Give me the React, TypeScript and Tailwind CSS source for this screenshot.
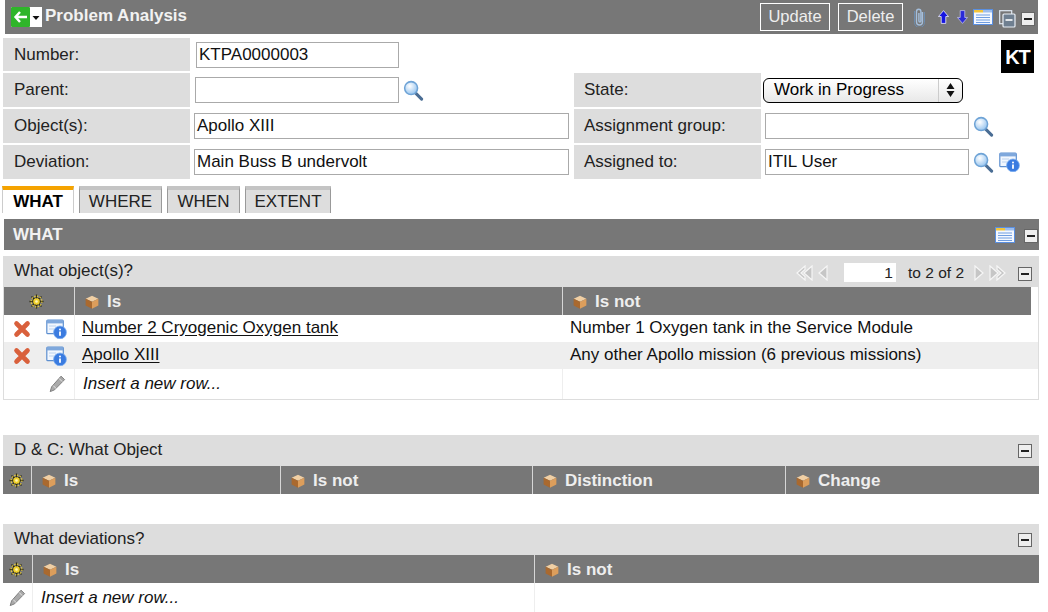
import React from "react";

const Mag = () => (
  <svg width="21" height="21" viewBox="0 0 22 22" className="shrink-0">
    <defs><radialGradient id="mg" cx="40%" cy="35%" r="70%"><stop offset="0" stopColor="#ffffff"/><stop offset="1" stopColor="#8fc0ee"/></radialGradient></defs>
    <path d="M13 13.5L19.5 20" stroke="#4a6d94" strokeWidth="3.2" strokeLinecap="round"/>
    <circle cx="8.5" cy="8.5" r="6.8" fill="url(#mg)" stroke="#6ea3d6" strokeWidth="1.6"/>
  </svg>
);
const Info = () => (
  <svg width="21" height="20" viewBox="0 0 21 20" className="shrink-0">
    <rect x="0.8" y="1.2" width="16.5" height="13.5" rx="1" fill="#f2f7fe" stroke="#5d8fd0" strokeWidth="1.2"/>
    <rect x="1" y="1.2" width="16" height="3.2" fill="#7fa8dc"/>
    <path d="M3 7h7M3 10h5" stroke="#bcd2ee" strokeWidth="1"/>
    <circle cx="14" cy="13.4" r="6.4" fill="#3a7be0"/>
    <circle cx="14" cy="13.4" r="6.4" fill="none" stroke="#7fb0f0" strokeWidth="0.8"/>
    <circle cx="14" cy="10.4" r="1" fill="#fff"/>
    <path d="M14 12.4v4.4" stroke="#fff" strokeWidth="1.8"/>
  </svg>
);
const Cross = () => (
  <svg width="18" height="18" viewBox="0 0 18 18" className="shrink-0">
    <path d="M3.5 3.5L14.5 14.5M14.5 3.5L3.5 14.5" stroke="#d9603c" strokeWidth="4.6" strokeLinecap="round"/>
  </svg>
);
const Pencil = () => (
  <svg width="17" height="18" viewBox="0 0 17 18" className="shrink-0">
    <path d="M12 1.2l3.6 3.4L5.6 14.8 1.2 16.6l1.4-4.8z" fill="#aaaaaa" stroke="#808080" strokeWidth="1"/>
    <path d="M4.2 10.6l3.2 3.2M10 3.4l3.2 3.2" stroke="#e6e6e6" strokeWidth="1"/>
  </svg>
);
const Box = () => (
  <svg width="14" height="14" viewBox="0 0 13 13" className="shrink-0">
    <path d="M6.5 .6L12.4 3.4 6.5 6.2 .6 3.4z" fill="#f0cfa4"/>
    <path d="M.6 3.4l5.9 2.8V12.8L.6 9.8z" fill="#a9692f"/>
    <path d="M12.4 3.4L6.5 6.2V12.8L12.4 9.8z" fill="#dc9e5c"/>
  </svg>
);
const Gear = () => (
  <svg width="15" height="15" viewBox="0 0 15 15" className="shrink-0">
    <g stroke="#2a2812" strokeWidth="1.3">
      <path d="M7.5 .5v14M.5 7.5h14M2.5 2.5l10 10M12.5 2.5l-10 10"/>
    </g>
    <circle cx="7.5" cy="7.5" r="5.4" fill="none" stroke="#e8cc3a" strokeWidth="1.2" strokeDasharray="1.5 1.3"/>
    <circle cx="7.5" cy="7.5" r="3.6" fill="#f0d02c" stroke="#3d3610" strokeWidth="1" strokeDasharray="1.2 0.8"/>
    <circle cx="7.5" cy="7.5" r="1.3" fill="#fff7b8"/>
  </svg>
);
const Minus = () => (
  <span className="flex h-[14px] w-[14px] shrink-0 items-center justify-center border border-[#666666] bg-[#eeeeee]">
    <span className="h-[2px] w-[8px] bg-[#222222]" />
  </span>
);
const Form = () => (
  <svg width="20" height="16" viewBox="0 0 20 16" className="shrink-0">
    <rect x="0.5" y="0.5" width="19" height="15" fill="#f4f8ff" stroke="#5a8fe0"/>
    <rect x="1" y="1" width="9" height="2.5" fill="#f2c33a"/>
    <rect x="10" y="1" width="9" height="2.5" fill="#9dbdec"/>
    <path d="M3 6h14M3 8.5h14M3 11h14M3 13.5h14" stroke="#6f9de0" strokeWidth="1"/>
  </svg>
);
const Arrow = ({ up }: { up?: boolean }) => (
  <svg width="11" height="16" viewBox="0 0 12 16" className="shrink-0">
    <path d={up ? "M6 1L11.5 7.5H8.5V15H3.5V7.5H0.5z" : "M6 15L11.5 8.5H8.5V1H3.5V8.5H0.5z"} fill={up ? "#1414e0" : "#2a2ad8"} stroke={up ? "#ffffff" : "#c9c9ef"} strokeWidth="0.8"/>
  </svg>
);
const Clip = () => (
  <svg width="13" height="20" viewBox="0 0 13 20" className="shrink-0">
    <path d="M9.5 5v10a3 3 0 0 1-6 0V4.5a2.2 2.2 0 0 1 4.4 0V14a1 1 0 0 1-2 0V6" fill="none" stroke="#a4bedb" strokeWidth="1.4"/>
    <path d="M11.5 5v10.5a5 5 0 0 1-10 0V4" fill="none" stroke="#6d8cae" strokeWidth="1"/>
  </svg>
);
const Copy = () => (
  <svg width="17" height="18" viewBox="0 0 17 18" className="mt-[3px] shrink-0">
    <rect x="0.7" y="0.7" width="12" height="13" fill="none" stroke="#dfe8f2" strokeWidth="1.2"/>
    <rect x="4" y="4" width="12" height="13" rx="1" fill="#6f7f90" stroke="#e9eff6" strokeWidth="1.2"/>
    <path d="M6.5 10h7" stroke="#fff" strokeWidth="1.6"/>
  </svg>
);
const Chev = ({ dir, dbl }: { dir: "l" | "r"; dbl?: boolean }) => (
  <svg width={dbl ? 17 : 11} height="16" viewBox={dbl ? "0 0 17 16" : "0 0 11 16"} className="shrink-0">
    <g fill="#c6c6c6" stroke="#f6f6f6" strokeWidth="1.2" transform={dir === "r" ? `scale(-1 1) translate(${dbl ? -17 : -11} 0)` : undefined}>
      {dbl && <path d="M9 1L1 8l8 7V11.5L5 8l4-3.5z" />}
      <path d={dbl ? "M16 1L8 8l8 7z" : "M10 1L2 8l8 7z"} />
    </g>
  </svg>
);

const Label = ({ children, w }: { children: React.ReactNode; w: string }) => (
  <div className={`flex items-center bg-[#dddddd] text-[#222222] ${w}`}>{children}</div>
);
const Field = ({ v, w }: { v?: string; w: string }) => (
  <div className={`flex h-[26px] items-center border border-[#aaaaaa] bg-white pb-[1px] pl-[2px] text-[#111111] ${w}`}>{v}</div>
);

const H = ({ t, w }: { t?: string; w: string }) => (
  <div className={`flex h-full items-center gap-[8px] border-r border-white/70 pl-[10px] pt-[1px] font-bold text-[#eeeeee] ${w}`}>
    <Box />
    {t}
  </div>
);
const SectionHead = ({ t, low, children }: { t: string; low?: boolean; children?: React.ReactNode }) => (
  <div className="flex h-[31px] items-center bg-[#dddddd] pl-[11px] pr-[7px] text-[#222222]">
    <span className="flex-1 pb-[2px]">{t}</span>
    {children}
    <span className={low ? "mt-[5px]" : "mt-[1px]"}><Minus /></span>
  </div>
);

export default function App() {
  return (
    <div className="h-[612px] w-[1048px] overflow-hidden bg-white text-[17px] leading-[18px] [font-family:'Liberation_Sans',Arial,sans-serif]">
      <div className="ml-[5px] flex h-[34px] w-[1033px] items-center bg-[#777777] pl-[6px] pr-[3px]">
        <div className="flex h-[20px] w-[31px] items-center bg-white">
          <svg width="19" height="20" viewBox="0 0 19 20" className="shrink-0">
            <rect width="19" height="20" rx="1" fill="#2fb52a"/>
            <path d="M9 5L4.5 10 9 15M5 10H16" fill="none" stroke="#fff" strokeWidth="2.4"/>
          </svg>
          <svg width="12" height="19" viewBox="0 0 12 19" className="shrink-0"><path d="M2.5 8h7L6 12z" fill="#111"/></svg>
        </div>
        <span className="ml-[3px] flex-1 pb-[3px] font-bold text-[#f2f2f2]">Problem Analysis</span>
        <div className="flex h-[28px] w-[70px] items-center justify-center border border-white pb-[2px] text-[16.5px] text-[#eeeeee]">Update</div>
        <div className="ml-[8px] flex h-[28px] w-[65px] items-center justify-center border border-white pb-[2px] text-[16.5px] text-[#eeeeee]">Delete</div>
        <span className="ml-[10px]"><Clip /></span>
        <span className="ml-[12px]"><Arrow up /></span>
        <span className="ml-[8px]"><Arrow /></span>
        <span className="ml-[5px]"><Form /></span>
        <span className="ml-[6px]"><Copy /></span>
        <span className="ml-[5px] mt-[3px]"><Minus /></span>
      </div>

      <div className="mt-[4px] ml-[3px] flex flex-col gap-[2px]">
        <div className="flex h-[33px]">
          <Label w="w-[187px] pl-[11px] pt-[1px]">Number:</Label>
          <div className="ml-[6px] flex-1 pt-[4px]"><Field v="KTPA0000003" w="w-[203px]" /></div>
          <div className="mr-[14px] mt-[2px] flex h-[33px] w-[33px] items-center justify-center bg-black text-[20px] font-bold tracking-[-1px] text-white">KT</div>
        </div>
        <div className="flex h-[34px]">
          <Label w="w-[187px] pl-[11px]">Parent:</Label>
          <div className="ml-[5px] flex w-[374px] items-center gap-[4px]"><Field w="w-[204px]" /><Mag /></div>
          <Label w="ml-[5px] w-[187px] pl-[10px]">State:</Label>
          <div className="ml-[2px] flex items-center">
            <div className="flex h-[25px] w-[200px] items-center rounded-[6px] border border-black bg-gradient-to-b from-white to-[#e8e8e8] pl-[10px]">
              <span className="flex-1 pb-[1px]">Work in Progress</span>
              <span className="flex h-full w-[24px] items-center justify-center border-l border-[#cccccc]">
                <svg width="9" height="16" viewBox="0 0 9 16"><path d="M4.5 1L8.5 7H.5zM4.5 15L8.5 9H.5z" fill="#111"/></svg>
              </span>
            </div>
          </div>
        </div>
        <div className="flex h-[34px]">
          <Label w="w-[187px] pl-[11px]">Object(s):</Label>
          <div className="ml-[4px] flex w-[375px] items-center"><Field v="Apollo XIII" w="w-[375px]" /></div>
          <Label w="ml-[5px] w-[187px] pl-[10px]">Assignment group:</Label>
          <div className="ml-[4px] flex items-center gap-[4px]"><Field w="w-[204px]" /><Mag /></div>
        </div>
        <div className="flex h-[34px]">
          <Label w="w-[187px] pl-[11px]">Deviation:</Label>
          <div className="ml-[4px] flex w-[375px] items-center"><Field v="Main Buss B undervolt" w="w-[375px]" /></div>
          <Label w="ml-[5px] w-[187px] pl-[10px]">Assigned to:</Label>
          <div className="ml-[4px] flex items-center gap-[4px]"><Field v="ITIL User" w="w-[204px]" /><Mag /><span className="ml-[1px]"><Info /></span></div>
        </div>
      </div>

      <div className="ml-[2px] mt-[7px] flex h-[27px] gap-[5px]">
        <div className="flex w-[72px] items-center justify-center border-x border-t-[4px] border-x-[#cccccc] border-t-[#f5a300] bg-white font-bold text-black">WHAT</div>
        {[["WHERE", "w-[83px]"], ["WHEN", "w-[73px]"], ["EXTENT", "w-[86px]"]].map(([t, w]) => (
          <div key={t} className={`flex items-center justify-center border-x border-t-[4px] border-x-[#999999] border-t-[#c4c4c4] bg-[#dddddd] text-[#222222] ${w}`}>{t}</div>
        ))}
      </div>

      <div className="ml-[4px] mt-[6px] flex h-[31px] w-[1035px] items-center bg-[#777777] pl-[9px] pr-[1px] font-bold text-[#f2f2f2]">
        <span className="flex-1">WHAT</span>
        <Form />
        <span className="ml-[9px] mt-[2px]"><Minus /></span>
      </div>

      <div className="ml-[3px] mt-[6px] w-[1036px]">
        <SectionHead t="What object(s)?" low>
          <div className="mr-[12px] mt-[2px] flex items-center text-[15.5px] text-[#222222]">
            <Chev dir="l" dbl />
            <span className="ml-[4px]"><Chev dir="l" /></span>
            <div className="ml-[16px] flex h-[19px] w-[52px] items-center justify-end bg-white pr-[3px]">1</div>
            <span className="ml-[12px]">to 2 of 2</span>
            <span className="ml-[10px]"><Chev dir="r" /></span>
            <span className="ml-[4px]"><Chev dir="r" dbl /></span>
          </div>
        </SectionHead>
        <div className="border-x border-b border-[#dddddd]">
          <div className="flex h-[28px] w-[1027px] bg-[#777777]">
            <div className="flex h-full w-[71px] items-center justify-center border-r border-white/70 pr-[5px]"><Gear /></div>
            <H t="Is" w="w-[488px]" />
            <H t="Is not" w="flex-1 border-r-0" />
          </div>
          {[
            ["Number 2 Cryogenic Oxygen tank", "Number 1 Oxygen tank in the Service Module", ""],
            ["Apollo XIII", "Any other Apollo mission (6 previous missions)", "bg-[#eeeeee]"],
          ].map(([a, b, bg]) => (
            <div key={a} className={`flex h-[27px] items-center ${bg}`}>
              <div className="flex h-full w-[71px] items-center gap-[15px] border-r border-[#eeeeee] pl-[9px]">
                <Cross /><Info />
              </div>
              <div className="w-[488px] pb-[2px] pl-[7px] text-[#111111] underline underline-offset-[2px]">{a}</div>
              <div className="flex-1 pb-[2px] pl-[7px] text-[#111111]">{b}</div>
            </div>
          ))}
          <div className="flex h-[30px] items-center">
            <div className="flex h-full w-[71px] items-center justify-end border-r border-[#eeeeee] pr-[8px]"><Pencil /></div>
            <div className="flex h-full w-[488px] items-center border-r border-[#eeeeee] pl-[8px] italic text-[#111111]">Insert a new row...</div>
          </div>
        </div>
      </div>

      <div className="ml-[3px] mt-[35px] w-[1036px]">
        <SectionHead t="D &amp; C: What Object" />
        <div className="flex h-[28px] bg-[#777777]">
          <div className="flex h-full w-[29px] items-center justify-center border-r border-white/70 pr-[2px]"><Gear /></div>
          <H t="Is" w="w-[249px]" />
          <H t="Is not" w="w-[252px]" />
          <H t="Distinction" w="w-[253px]" />
          <H t="Change" w="flex-1 border-r-0" />
        </div>
      </div>

      <div className="ml-[3px] mt-[30px] w-[1036px]">
        <SectionHead t="What deviations?" />
        <div className="flex h-[28px] bg-[#777777]">
          <div className="flex h-full w-[30px] items-center justify-center border-r border-white/70 pr-[2px]"><Gear /></div>
          <H t="Is" w="w-[502px]" />
          <H t="Is not" w="flex-1 border-r-0" />
        </div>
        <div className="flex h-[29px] items-center">
          <div className="flex h-full w-[30px] items-center justify-center border-r border-[#eeeeee]"><Pencil /></div>
          <div className="flex h-full w-[502px] items-center border-r border-[#eeeeee] pl-[8px] italic text-[#111111]">Insert a new row...</div>
        </div>
      </div>
    </div>
  );
}
